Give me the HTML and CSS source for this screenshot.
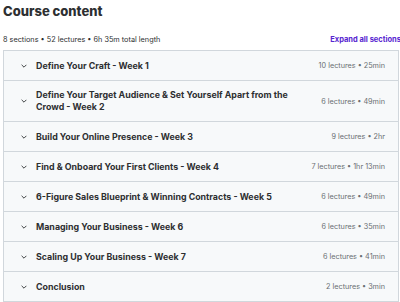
FILE: index.html
```html
<!DOCTYPE html>
<html lang="en">
<head>
  <meta charset="UTF-8">
  <meta name="viewport" content="width=device-width, initial-scale=1.0">
  <title>Course content</title>
  <link rel="stylesheet" href="styles.css">
</head>
<body>
  <div class="container">
    <h2 class="heading">Course content</h2>

    <div class="summary">
      <span>8 sections • 52 lectures • 6h 35m total length</span>
      <button class="expand-btn">Expand all sections</button>
    </div>

    <div class="sections">
      <div class="section">
        <span class="chevron"><svg viewBox="0 0 10 6" width="6" height="4"><path d="M1 1l4 4 4-4" fill="none" stroke="currentColor" stroke-width="1.5"/></svg></span>
        <span class="title">Define Your Craft - Week 1</span>
        <span class="meta">10 lectures • 25min</span>
      </div>
      <div class="section">
        <span class="chevron"><svg viewBox="0 0 10 6" width="6" height="4"><path d="M1 1l4 4 4-4" fill="none" stroke="currentColor" stroke-width="1.5"/></svg></span>
        <span class="title">Define Your Target Audience &amp; Set Yourself Apart from the Crowd - Week 2</span>
        <span class="meta">6 lectures • 49min</span>
      </div>
      <div class="section">
        <span class="chevron"><svg viewBox="0 0 10 6" width="6" height="4"><path d="M1 1l4 4 4-4" fill="none" stroke="currentColor" stroke-width="1.5"/></svg></span>
        <span class="title">Build Your Online Presence - Week 3</span>
        <span class="meta">9 lectures • 2hr</span>
      </div>
      <div class="section">
        <span class="chevron"><svg viewBox="0 0 10 6" width="6" height="4"><path d="M1 1l4 4 4-4" fill="none" stroke="currentColor" stroke-width="1.5"/></svg></span>
        <span class="title">Find &amp; Onboard Your First Clients - Week 4</span>
        <span class="meta">7 lectures • 1hr 13min</span>
      </div>
      <div class="section">
        <span class="chevron"><svg viewBox="0 0 10 6" width="6" height="4"><path d="M1 1l4 4 4-4" fill="none" stroke="currentColor" stroke-width="1.5"/></svg></span>
        <span class="title">6-Figure Sales Blueprint &amp; Winning Contracts - Week 5</span>
        <span class="meta">6 lectures • 49min</span>
      </div>
      <div class="section">
        <span class="chevron"><svg viewBox="0 0 10 6" width="6" height="4"><path d="M1 1l4 4 4-4" fill="none" stroke="currentColor" stroke-width="1.5"/></svg></span>
        <span class="title">Managing Your Business - Week 6</span>
        <span class="meta">6 lectures • 35min</span>
      </div>
      <div class="section">
        <span class="chevron"><svg viewBox="0 0 10 6" width="6" height="4"><path d="M1 1l4 4 4-4" fill="none" stroke="currentColor" stroke-width="1.5"/></svg></span>
        <span class="title">Scaling Up Your Business - Week 7</span>
        <span class="meta">6 lectures • 41min</span>
      </div>
      <div class="section">
        <span class="chevron"><svg viewBox="0 0 10 6" width="6" height="4"><path d="M1 1l4 4 4-4" fill="none" stroke="currentColor" stroke-width="1.5"/></svg></span>
        <span class="title">Conclusion</span>
        <span class="meta">2 lectures • 3min</span>
      </div>
    </div>
  </div>
</body>
</html>
```

FILE: styles.css
```css
:root {
  --text: #2d2f31;
  --gray: #6a6f73;
  --purple: #5624d0;
  --border: #d1d7dc;
  --row-bg: #f7f9fa;
}

* {
  box-sizing: border-box;
  margin: 0;
  padding: 0;
}

body {
  font-family: Inter, "Noto Sans", sans-serif;
  color: var(--text);
  background: #fff;
  overflow: hidden;
}

.container {
  width: 396px;
  margin-left: 3px;
}

.heading {
  font-size: 13px;
  font-weight: 800;
  line-height: 22px;
}

.summary {
  display: flex;
  justify-content: space-between;
  align-items: center;
  height: 28px;
  padding-top: 6px;
  font-size: 7.3px;
  color: var(--text);
}

.expand-btn {
  background: none;
  border: none;
  font-family: inherit;
  font-size: 7.5px;
  font-weight: 700;
  color: var(--purple);
  margin-right: -2px;
}

.sections {
  border: 1px solid var(--border);
  border-bottom: none;
}

.section {
  display: flex;
  align-items: center;
  min-height: 30px;
  padding: 8px 13px 8px 17px;
  background: var(--row-bg);
  border-bottom: 1px solid var(--border);
}

.chevron {
  display: flex;
  flex: none;
  width: 15px;
  color: var(--text);
}

.title {
  flex: 1;
  font-size: 8.85px;
  font-weight: 700;
  line-height: 12px;
}

.meta {
  margin-left: 32px;
  font-size: 7.25px;
  color: var(--gray);
  white-space: nowrap;
}
```
